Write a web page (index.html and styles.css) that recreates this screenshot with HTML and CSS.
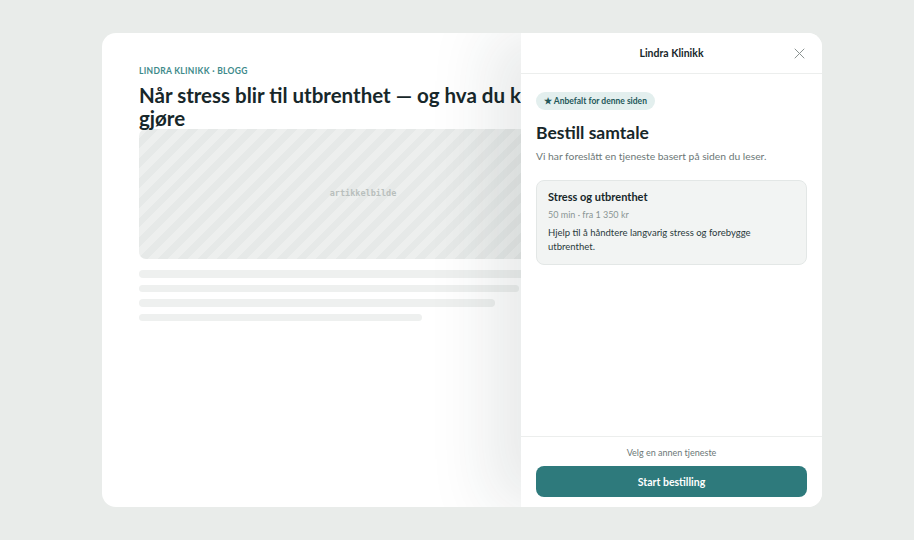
FILE: index.html
```html
<!DOCTYPE html>
<html lang="no">
<head>
<meta charset="utf-8">
<title>Lindra Klinikk</title>
<link rel="stylesheet" href="styles.css">
</head>
<body>
<div class="stage">
  <div class="card">
    <article class="article">
      <div class="eyebrow">LINDRA KLINIKK · BLOGG</div>
      <h1 class="title">Når stress blir til utbrenthet — og hva du kan gjøre</h1>
      <div class="hero"><span>artikkelbilde</span></div>
      <div class="skel s1"></div>
      <div class="skel s2"></div>
      <div class="skel s3"></div>
      <div class="skel s4"></div>
    </article>
    <aside class="drawer">
      <header class="drawer-head">
        <div class="drawer-title">Lindra Klinikk</div>
        <button class="close" aria-label="Lukk">
          <svg width="11" height="11" viewBox="0 0 11 11"><path d="M1 1L10 10M10 1L1 10" stroke="#8a9291" stroke-width="1" fill="none" stroke-linecap="round"/></svg>
        </button>
      </header>
      <div class="drawer-body">
        <span class="badge">★ Anbefalt for denne siden</span>
        <h2 class="heading">Bestill samtale</h2>
        <p class="sub">Vi har foreslått en tjeneste basert på siden du leser.</p>
        <div class="service">
          <div class="svc-title">Stress og utbrenthet</div>
          <div class="svc-meta">50 min · fra 1 350 kr</div>
          <div class="svc-desc">Hjelp til å håndtere langvarig stress og forebygge utbrenthet.</div>
        </div>
      </div>
      <footer class="drawer-foot">
        <div class="other">Velg en annen tjeneste</div>
        <button class="cta">Start bestilling</button>
      </footer>
    </aside>
  </div>
</div>
</body>
</html>
```
FILE: styles.css
```css
* { box-sizing: border-box; }
html, body { margin: 0; padding: 0; }
body {
  background: #e9ecea;
  font-family: Lato, "Noto Sans", sans-serif;
  color: #17272a;
  width: 914px;
  height: 540px;
  overflow: hidden;
}
.stage {
  padding: 33px 92px 33px 102px;
}
.card {
  width: 720px;
  height: 474px;
  background: #fff;
  border-radius: 14px;
  display: flex;
  overflow: hidden;
  position: relative;
}
.article {
  flex: 1;
  padding: 32px 0 0 37px;
  min-width: 0;
  overflow: hidden;
}
.eyebrow {
  font-size: 8.5px;
  font-weight: 700;
  letter-spacing: 0.3px;
  color: #3e8a8a;
  line-height: 12px;
}
.title {
  margin: 7px 0 0;
  width: 448px;
  font-size: 20.5px;
  line-height: 22.5px;
  font-weight: 700;
  color: #17272a;
}
.hero {
  width: 448px;
  height: 130px;
  border-radius: 7px;
  background: repeating-linear-gradient(135deg, #edefee 0 7px, #e6e9e8 7px 14px);
  display: flex;
  align-items: center;
  justify-content: center;
}
.hero span {
  font-family: "DejaVu Sans Mono", monospace;
  font-size: 8.5px;
  font-weight: 700;
  color: #b9bfbd;
  margin-top: -2px;
}
.skel {
  height: 7.5px;
  border-radius: 4px;
  background: #eef0ef;
  margin-top: 7px;
}
.s1 { width: 448px; margin-top: 11px; }
.s2 { width: 380px; }
.s3 { width: 356px; }
.s4 { width: 283px; }
.drawer {
  width: 301px;
  flex: none;
  background: #fff;
  display: flex;
  flex-direction: column;
  box-shadow: -30px 0 60px rgba(30, 45, 45, 0.10);
  position: relative;
}
.drawer-head {
  height: 41px;
  border-bottom: 1px solid #eceeed;
  display: flex;
  align-items: center;
  justify-content: center;
  position: relative;
}
.drawer-title {
  font-size: 10.5px;
  font-weight: 700;
  color: #17272a;
}
.close {
  position: absolute;
  right: 17px;
  top: 15px;
  background: none;
  border: 0;
  padding: 0;
  width: 11px;
  height: 11px;
  display: block;
}
.close svg { display: block; }
.drawer-body {
  flex: 1;
  padding: 14px 15px 0;
}
.badge {
  display: inline-block;
  background: #e3efee;
  color: #23585a;
  font-size: 8.5px;
  font-weight: 700;
  line-height: 18px;
  padding: 0 8px;
  border-radius: 9px;
}
.heading {
  margin: 12px 0 0;
  font-size: 17.5px;
  line-height: 22px;
  font-weight: 700;
}
.sub {
  margin: 5px 0 0;
  font-size: 10.3px;
  line-height: 14px;
  color: #6c7877;
}
.service {
  margin-top: 17px;
  background: #f2f4f3;
  border: 1px solid #e3e7e6;
  border-radius: 8px;
  padding: 9px 11px 10px;
}
.svc-title {
  font-size: 11px;
  font-weight: 700;
  line-height: 14px;
}
.svc-meta {
  font-size: 9px;
  color: #8a9493;
  margin-top: 5px;
  line-height: 12px;
}
.svc-desc {
  font-size: 9.5px;
  color: #2a3a3c;
  margin-top: 5px;
  line-height: 14px;
}
.drawer-foot {
  border-top: 1px solid #eceeed;
  padding: 10px 15px 10px;
  display: flex;
  flex-direction: column;
  align-items: stretch;
}
.other {
  text-align: center;
  font-size: 9px;
  color: #6c7877;
  line-height: 12px;
}
.cta {
  margin-top: 7px;
  height: 31px;
  border: 0;
  border-radius: 8px;
  background: #2e7a7c;
  color: #fff;
  font-family: inherit;
  font-size: 10.5px;
  font-weight: 700;
}
```
